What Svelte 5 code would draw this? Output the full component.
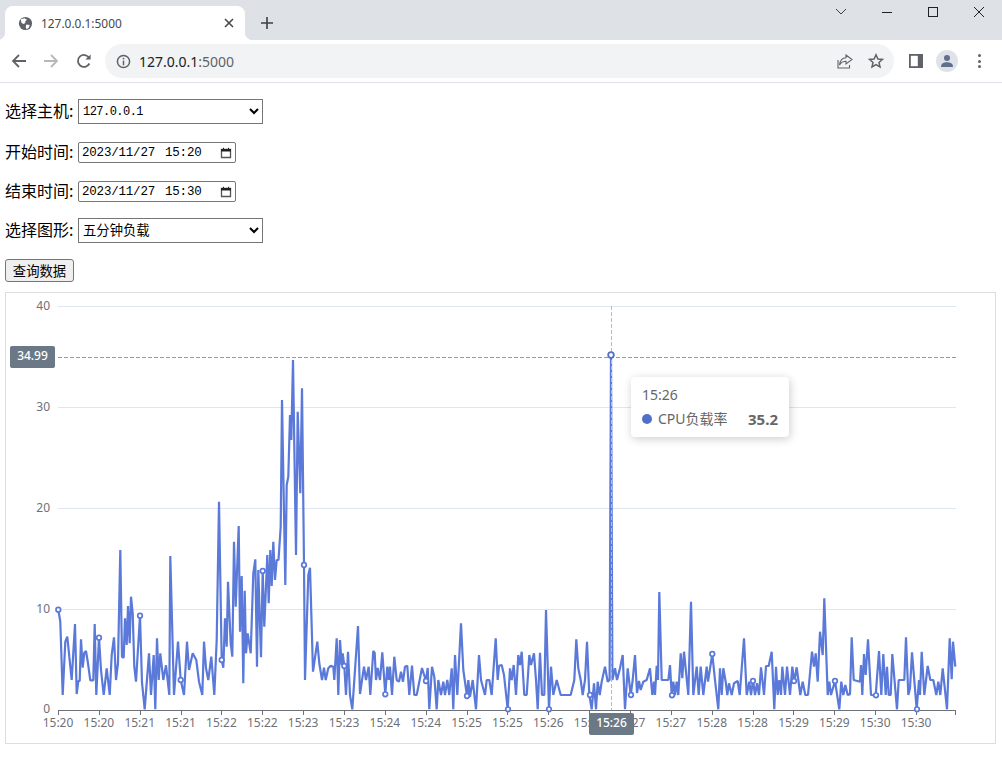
<script>
  // cpu load trace, x/y pairs in page pixels
  const trace = `58.3,609.7 60.3,621.7 62.7,695 65.3,641.7 67.3,636.7 69.3,656.7 71.7,680 75,624 76.7,694 78.3,681 79.7,681 81,639.3 82.7,667.7 84.3,652.7 86,651 88,663.3 90.3,680.3 93.3,680.3 94.7,624 96.3,695 99,637.7 101,670 103.7,695 106.7,668.3 109.7,695 111.7,655 114,637.3 116,680 118,663 120.3,550 122,656.7 123.7,657.7 125,618.3 126.7,645 128,606 129.7,643.3 131,596.7 132.7,613.3 134.3,666.7 136,681.7 140,615.7 142,682.7 144.7,709.3 149,653.3 151,695 153.7,655 155.3,709.3 157,638.3 158.7,680 160.3,653.3 163.3,680 166,665.3 169.3,695 170.3,556 174,695 178,641.7 180.7,680 184,695 187,641.7 189,670 192.7,653.3 196.3,660 199,681.7 202.3,695 204,641.7 206,668.3 208.3,680 211.3,656.7 214.3,695 216.7,640 219,501.7 221.7,660 223.3,667.7 225,618.3 226.7,646.7 228,581.7 230.7,643.3 232.3,656.7 234,541.7 235.7,606.7 238.7,526 240,631.7 241.7,576 243.3,683.3 244.7,590.7 246,653.3 247.7,633.3 250.7,653.3 253.3,573.3 255.3,559.3 257,666.7 258.3,570 261,657.3 262.7,571 264.3,626.7 267.3,555 268.7,603.3 270.3,550 271.7,586 273.3,541.7 275,580 276.7,560 278.5,560 280.7,526.7 282,400 285.3,585 286.7,485 288.3,476.7 290,415 291.3,440 293,360 296,555 297.7,411.7 300.3,493.3 302,388.3 304,565 305,680 308.3,575 310,567.7 313,671.7 317.3,641.7 319.3,663.3 322,680 324,667.7 325.7,680 328.3,668.3 330.7,665.7 333.3,666.7 334.3,680 336.7,638.3 338.3,695 340,640 341.7,665 342.7,653.3 344.3,666 346,695 348,651.7 350,695 352.3,709.3 358,626 360,694 364,666.7 366,680 368.7,666.7 370.3,695 373.3,651 374.7,653 376,680 377.7,668 380,680 382.3,652.3 385.3,694.3 387.3,666.7 388.7,680 390,666.7 392,695 394.3,656.7 396.7,680 399,681.7 401,671.7 403,681.7 405,666.7 407.3,665.7 409.3,695 412,665.7 414.3,695 416.7,695 419.3,681.7 422,668 426,681 427.7,668 429.3,709.3 432,666.7 434.3,676.7 436.7,709.3 438.3,680 441,695 443.3,681.7 445,695 447.3,680 449.3,695 451.7,668.3 453.3,709.3 455,655 457.3,695 461,623.3 463.3,670 467,696 468.3,680 470,696.7 472.7,680 476,709.3 479,655 481,680 485,695 486.7,680 489.3,680 491.7,695 495.7,638.3 497.7,680 499,665.7 501.7,665 504,675 507.7,709.3 510,668.3 511.7,680 513.7,665 516,695 518.3,655 520,665 521.7,651.7 524.3,695 526.7,695 529.3,655 531,665 534,653.3 536,680 537.7,709.3 540,652.7 542,695 544.3,695 546,610 549,709.3 551,666.7 553.3,695 556.7,680 560.7,695 570.7,695 574.3,680 576.3,639.3 578.3,668.3 580.7,680 582.7,695 585,680 587,641.7 589.3,695 591.7,709.3 594,683.3 596,709.3 597.7,681.7 599.7,695 601.7,681.7 605,666.7 607.7,681.7 609.6,680 611,355 612.4,680 615,668.3 617,680 620,668.3 622.7,655 625,709.3 627.7,668.3 630.7,695 632.7,680 635,655 637,693 639,681 640.7,690 643.3,681.7 646.7,680 650,668.3 652.3,695 654,681.7 655,695 656.7,665.7 658,680 659.3,592 661.7,680 668.3,680 670,665 671.7,695 673.3,681.7 675,695 676.7,681.7 678.3,695 680.7,653.3 682.3,678.3 684,651.7 688.3,695 691,601.7 693.3,695 696.7,666.7 698.7,695 700.7,666.7 703.3,695 706.7,666.7 708,681.7 712.3,654 715,680 718.3,709.3 720,668.3 721.7,695 723.3,668.3 725.7,681.7 727.3,695 729,683.3 731.7,695 734,683.3 737.7,681 739.7,695 744,638.3 746.7,695 749.3,681.7 751,695 753,680 755,695 757,683.3 759,695 761,667.3 764,695 766,666 768.7,666 771.7,651.7 774.3,709.3 776,666.7 777.7,695 779.3,680 781,695 782.3,666.7 785,695 787,666.7 790,695 792.3,666.7 794.3,681.7 796.7,667.3 800.3,695 802.7,681.7 805.3,695 808,695 812,651.7 814,666.7 815.7,653.3 817.7,681.7 820,631.7 822.7,655 824.3,598.3 827.7,695 829.3,681.7 831,695 835,681 839.3,709.3 841.3,681.7 843.3,695 845.3,685 847.7,695 850,694.3 851.7,637.3 853.7,680 860,681.7 861,665 862.3,695 864,654 865.7,675 868,639.3 871,695 875.7,695.3 879,651 881.3,695 883.3,654 885.7,695 887,666.7 888.7,695 890.7,695 892.3,654 897,709.3 898.7,680 904.3,680 906,637.3 908.3,695 910,688.3 912,652.3 916.7,709.3 919,680 920,695 921.7,651.7 924.3,695 927.7,666 930.3,680 933.3,680 936.3,695 938.3,681.7 940.3,695 942.7,668.3 947,709.3 949.7,638.3 951.7,679.3 953,641.7 955.3,666.7`;

  const markers = [[58.3,609.7],[99,637.7],[140,615.7],[180.7,680],[221.7,660],[262.7,571],[304,565],[344.3,666],[385.3,694.3],[426,681],[467,696],[508,709.3],[549,709.3],[590,695],[631,695],[672,695.3],[712.3,654],[753,681],[794,681],[835,681],[876,695.3],[917,709.3]];

  const yTicks = [[40,306],[30,407],[20,508],[10,609]];
  const xLabels = ['15:20','15:20','15:21','15:21','15:22','15:22','15:23','15:23','15:24','15:24','15:25','15:25','15:26','15:26','15:27','15:27','15:28','15:28','15:29','15:29','15:30','15:30'];
  const tickX = (i) => 58 + i * 40.86;
</script>

<div class="chrome">
  <div class="tabstrip">
    <div class="tab">
      <svg class="globe" viewBox="0 0 16 16" width="15" height="15"><circle cx="8" cy="8" r="7" fill="#5f6368"/><path d="M3 3.5 L7 2.5 L9.5 4 L7.5 6 L8 7.5 L5.5 8.5 L3.5 7 Z M9 9 L12.5 9.5 L11.5 12.5 L9 14 L8.2 11.5 Z" fill="#fff"/></svg>
      <span class="tab-title">127.0.0.1:5000</span>
      <svg class="tab-x" viewBox="0 0 10 10" width="10" height="10"><path d="M1 1 L9 9 M9 1 L1 9" stroke="#45484c" stroke-width="1.6"/></svg>
    </div>
    <svg class="newtab" viewBox="0 0 12 12" width="12" height="12"><path d="M6 0 V12 M0 6 H12" stroke="#3c4043" stroke-width="1.6"/></svg>
    <div class="winctl">
      <svg viewBox="0 0 46 24" width="46" height="24"><path d="M18 9 L23 14 L28 9" fill="none" stroke="#3c4043"/></svg>
      <svg viewBox="0 0 46 24" width="46" height="24"><path d="M18 12.5 H28" stroke="#202124"/></svg>
      <svg viewBox="0 0 46 24" width="46" height="24"><rect x="18.5" y="7.5" width="9" height="9" fill="none" stroke="#202124"/></svg>
      <svg viewBox="0 0 46 24" width="46" height="24"><path d="M18 7 L28 17 M28 7 L18 17" stroke="#202124"/></svg>
    </div>
  </div>
  <div class="toolbar">
    <svg class="nav" viewBox="0 0 16 16" width="16" height="16"><path d="M15 8 H2 M8 2 L2 8 L8 14" fill="none" stroke="#5f6368" stroke-width="1.8"/></svg>
    <svg class="nav" viewBox="0 0 16 16" width="16" height="16"><path d="M1 8 H14 M8 2 L14 8 L8 14" fill="none" stroke="#b6b8bb" stroke-width="1.8"/></svg>
    <svg class="nav" viewBox="0 0 16 16" width="16" height="16"><path d="M13.4 10.5 A6 6 0 1 1 13.2 5" fill="none" stroke="#5f6368" stroke-width="1.8"/><path d="M14.6 1.4 V6.6 H9.4 Z" fill="#5f6368"/></svg>
    <div class="omnibox">
      <svg viewBox="0 0 16 16" width="15" height="15"><circle cx="8" cy="8" r="6.5" fill="none" stroke="#5f6368" stroke-width="1.6"/><path d="M8 7 V12" stroke="#5f6368" stroke-width="1.6"/><circle cx="8" cy="4.9" r="1" fill="#5f6368"/></svg>
      <span class="url"><b>127.0.0.1</b>:5000</span>
      <svg class="share" viewBox="0 0 16 16" width="16" height="16"><path d="M9 2 L15 6.5 L9 11 V8.3 C6 8.3 4 9.5 2.5 12 C3 8 5 5 9 4.8 Z M1 7 V15 H12.5 V12" fill="none" stroke="#5f6368" stroke-width="1.1"/></svg>
      <svg class="star" viewBox="0 0 16 16" width="16" height="16"><path d="M8 1.8 L9.9 6 L14.4 6.4 L11 9.4 L12 13.9 L8 11.6 L4 13.9 L5 9.4 L1.6 6.4 L6.1 6 Z" fill="none" stroke="#5f6368" stroke-width="1.5"/></svg>
    </div>
    <svg class="panel" viewBox="0 0 14 14" width="14" height="14"><rect x="0" y="0" width="14" height="14" fill="#5f6368"/><rect x="1.8" y="1.8" width="7" height="10.4" fill="#fff"/></svg>
    <div class="avatar">
      <svg viewBox="0 0 14 14" width="14" height="14"><circle cx="7" cy="4" r="3" fill="#5f6f8c"/><path d="M1 13 C1 9 4 8.2 7 8.2 C10 8.2 13 9 13 13 Z" fill="#5f6f8c"/></svg>
    </div>
    <div class="menu"><i></i><i></i><i></i></div>
  </div>
</div>

<div class="page">
  <div class="row">
    <span class="label">选择主机:</span>
    <select class="host"><option>127.0.0.1</option></select>
  </div>
  <div class="row date">
    <span class="label">开始时间:</span>
    <div class="datebox">
      <span class="d">2023/11/27</span><span class="t">15:20</span>
      <svg viewBox="0 0 12 12" width="12" height="12"><path d="M1.5 2.5 H10.5 V10.5 H1.5 Z" fill="none" stroke="#555" stroke-width="1.3"/><rect x="1" y="2" width="10" height="2.5" fill="#222"/><path d="M3.5 .8 V2.5 M8.5 .8 V2.5" stroke="#222"/></svg>
    </div>
  </div>
  <div class="row date">
    <span class="label">结束时间:</span>
    <div class="datebox">
      <span class="d">2023/11/27</span><span class="t">15:30</span>
      <svg viewBox="0 0 12 12" width="12" height="12"><path d="M1.5 2.5 H10.5 V10.5 H1.5 Z" fill="none" stroke="#555" stroke-width="1.3"/><rect x="1" y="2" width="10" height="2.5" fill="#222"/><path d="M3.5 .8 V2.5 M8.5 .8 V2.5" stroke="#222"/></svg>
    </div>
  </div>
  <div class="row">
    <span class="label">选择图形:</span>
    <select class="kind"><option>五分钟负载</option></select>
  </div>
  <div class="row"><button>查询数据</button></div>

  <div class="chart">
    <svg class="plot" width="989" height="450" viewBox="6 293 989 450">
      {#each yTicks as [v, y]}
        <line x1="58" x2="956" y1={y + 0.5} y2={y + 0.5} stroke="#e0e6f1"/>
        <text x="50" y={y + 4} class="ax" text-anchor="end">{v}</text>
      {/each}
      <text x="50" y="713" class="ax" text-anchor="end">0</text>

      <line x1="58" x2="956" y1="710.5" y2="710.5" stroke="#6e7079"/>
      {#each xLabels as l, i}
        <line x1={Math.round(tickX(i)) + 0.5} x2={Math.round(tickX(i)) + 0.5} y1="710" y2="715" stroke="#6e7079"/>
        <text x={tickX(i)} y="727" class="ax" text-anchor="middle">{l}</text>
      {/each}
      <line x1="955.5" x2="955.5" y1="710" y2="715" stroke="#6e7079"/>

      <line x1="58" x2="956" y1="357.5" y2="357.5" stroke="#999" stroke-dasharray="4 2"/>

      <polyline points={trace} fill="none" stroke="#5a79d9" stroke-width="2.2" stroke-linejoin="bevel"/>
      <line x1="611.5" x2="611.5" y1="306" y2="710" stroke="#bbb" stroke-dasharray="4 2"/>
      {#each markers as [x, y]}
        <circle cx={x} cy={y} r="2.3" fill="#fff" stroke="#5a79d9" stroke-width="1.7"/>
      {/each}
      <circle cx="611" cy="355" r="2.8" fill="#fff" stroke="#5470c6" stroke-width="1.8"/>

      <rect x="10" y="346" width="45" height="22" rx="2" fill="#6a7985"/>
      <text x="32.5" y="360" class="chip" text-anchor="middle">34.99</text>
      <rect x="589" y="713" width="45" height="22" rx="2" fill="#6a7985"/>
      <text x="611.5" y="727" class="chip" text-anchor="middle">15:26</text>
    </svg>
    <div class="tooltip">
      <div class="tt-time">15:26</div>
      <div class="tt-row"><i></i><span>CPU负载率</span><b>35.2</b></div>
    </div>
  </div>
</div>

<style>
  :global(body) { background: #fff; font-family: "Noto Sans CJK SC", sans-serif; overflow: hidden; }

  .tabstrip { height: 40px; background: #dee1e6; display: flex; align-items: flex-end; padding-left: 5px; position: relative; }
  .tab { width: 240px; height: 34px; background: #fff; border-radius: 8px 8px 0 0; display: flex; align-items: center; padding: 0 11px 0 13px; box-sizing: border-box; position: relative; }
  .tab::before, .tab::after { content: ''; position: absolute; bottom: 0; width: 8px; height: 8px; }
  .tab::before { left: -8px; background: radial-gradient(circle at 0 0, #dee1e6 8px, #fff 8.5px); }
  .tab::after { right: -8px; background: radial-gradient(circle at 100% 0, #dee1e6 8px, #fff 8.5px); }
  .tab-title { font: 11.9px "Noto Sans", sans-serif; color: #45484c; margin-left: 8px; flex: 1; }
  .newtab { margin: 0 0 11px 16px; }
  .winctl { position: absolute; right: 0; top: 0; display: flex; }

  .toolbar { height: 42px; background: #fff; border-bottom: 1px solid #dee1e6; display: flex; align-items: center; position: relative; }
  .nav { margin-left: 11px; margin-right: 6px; }
  .nav:nth-child(2) { margin-left: 10px; margin-right: 7px; }
  .nav:nth-child(3) { margin-left: 10px; margin-right: 6px; }
  .omnibox { margin-left: 7px; width: 789px; height: 34px; border-radius: 17px; background: #f1f3f4; display: flex; align-items: center; padding-left: 11px; box-sizing: border-box; }
  .url { font: 14px "Noto Sans", sans-serif; color: #5f6368; margin-left: 8px; flex: 1; }
  .url b { font-weight: 400; color: #202124; }
  .share { margin-right: 15px; }
  .star { margin-right: 10px; }
  .panel { margin-left: 15px; }
  .avatar { width: 22px; height: 22px; border-radius: 50%; background: #dfe2e9; display: flex; align-items: center; justify-content: center; margin-left: 13px; }
  .menu { margin-left: 20px; display: flex; flex-direction: column; gap: 2.5px; }
  .menu i { width: 3px; height: 3px; border-radius: 50%; background: #5f6368; display: block; }

  .page { padding: 16px 6px 0 5px; display: flex; flex-direction: column; gap: 16px; }
  .row { display: flex; align-items: center; }
  .row.date { margin-top: 2px; }
  .label { font-size: 16px; line-height: 19px; padding-bottom: 2px; color: #000; margin-right: 3px; width: 70px; white-space: nowrap; }

  select { height: 25px; width: 185px; box-sizing: border-box; padding: 0; background: #fff; color: #000; }
  .host { font: 12px "Liberation Mono", monospace; letter-spacing: -0.53px; }
  .kind { font: 13.33px "Noto Sans CJK SC", sans-serif; padding-bottom: 3px; }

  .datebox { width: 158px; height: 21px; box-sizing: border-box; border: 1px solid #767676; border-radius: 2px; display: flex; align-items: center; padding: 0 3px 0 3px; font: 12.5px "Liberation Mono", monospace; letter-spacing: -0.2px; color: #000; }
  .datebox .t { margin-left: 10px; flex: 1; }

  button { width: 69px; height: 23px; padding: 0; font: 13.33px "Noto Sans CJK SC", sans-serif; background: #efefef; border: 1px solid #767676; border-radius: 3px; color: #000; margin-bottom: -6px; }

  .chart { position: relative; height: 452px; border: 1px solid #ddd; box-sizing: border-box; width: 991px; }
  .plot { display: block; }
  .ax { font: 12px "Noto Sans", sans-serif; fill: #6e7079; }
  .chip { font: 500 12px "Noto Sans", sans-serif; fill: #fff; }

  .tooltip { position: absolute; left: 625px; top: 84px; width: 158px; height: 60px; background: #fff; border-radius: 4px; box-shadow: 1px 2px 10px rgba(0,0,0,.2); padding: 8px 11px; box-sizing: border-box; font: 14px "Noto Sans", "Noto Sans CJK SC", sans-serif; color: #666; }
  .tt-time { line-height: 20px; }
  .tt-row { display: flex; align-items: center; line-height: 20px; margin-top: 4px; }
  .tt-row i { width: 10px; height: 10px; border-radius: 50%; background: #4f6fc9; margin-right: 6px; }
  .tt-row span { flex: 1; }
  .tt-row b { font-weight: 700; font-size: 15px; }
</style>
